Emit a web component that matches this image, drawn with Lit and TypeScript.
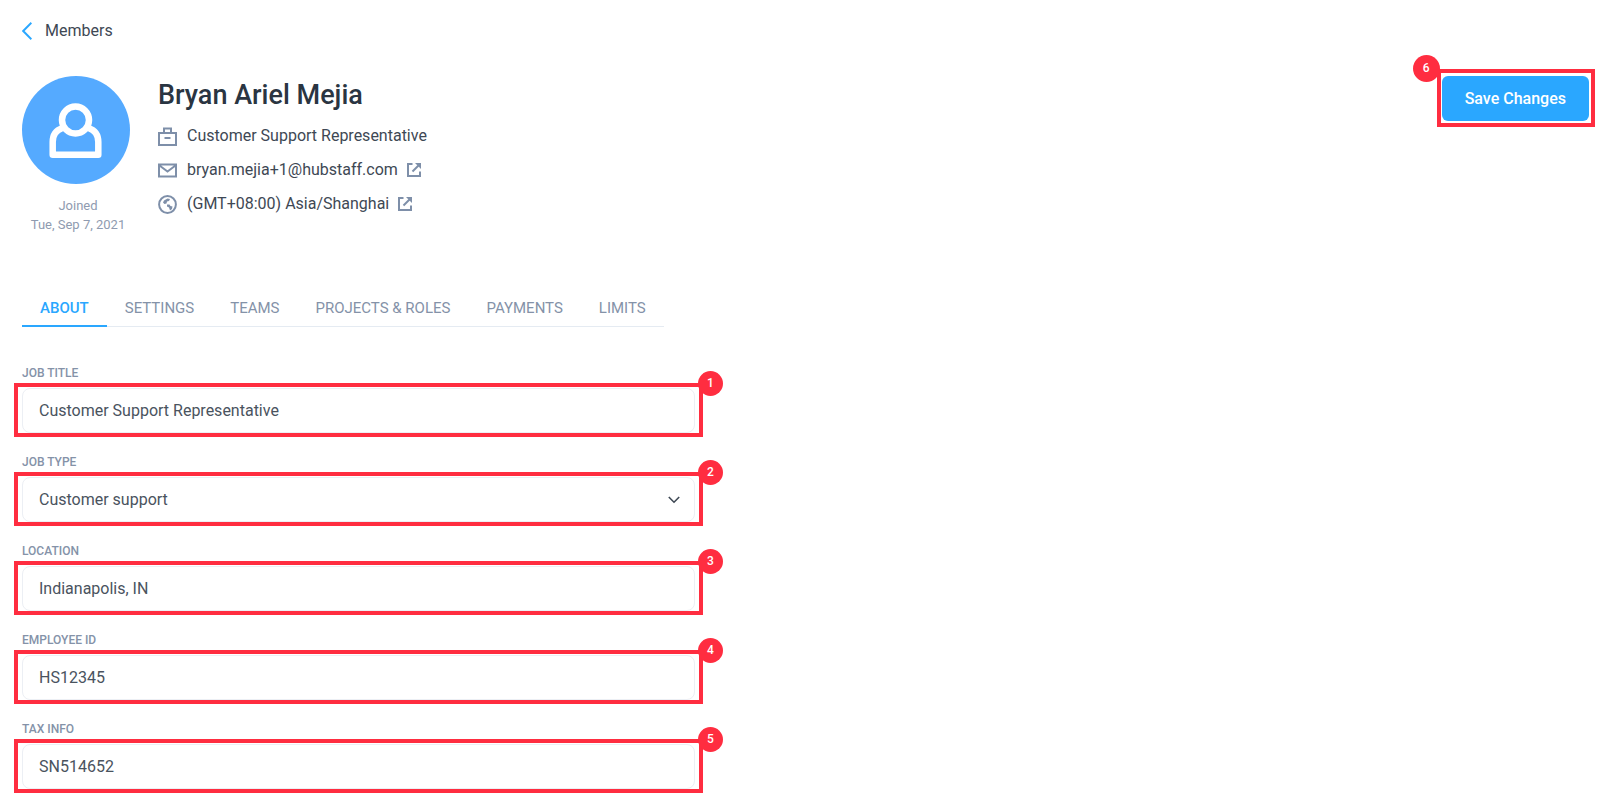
import { LitElement, html, svg, css, nothing } from "lit";
import { customElement, property } from "lit/decorators.js";

type Field = { id: string; label: string; value: string; options?: string[] };

const FIELDS: Field[] = [
  { id: "job-title", label: "Job title", value: "Customer Support Representative" },
  { id: "job-type", label: "Job type", value: "Customer support", options: ["Customer support"] },
  { id: "location", label: "Location", value: "Indianapolis, IN" },
  { id: "employee-id", label: "Employee ID", value: "HS12345" },
  { id: "tax-info", label: "Tax info", value: "SN514652" },
];

const TABS = ["About", "Settings", "Teams", "Projects & roles", "Payments", "Limits"];

const external = () => svg`<svg viewBox="0 0 14 14" width="14" height="14" aria-hidden="true">
  <path d="M5.500 1H1v12h12V8.500" fill="none" stroke="currentColor" stroke-width="2"/>
  <path d="M12 2L5.500 8.500" fill="none" stroke="currentColor" stroke-width="2"/>
  <path d="M8 0h6v6l-2-2-2-2z" fill="currentColor"/>
</svg>`;

/* Numbered frame that highlights the control it wraps. */
@customElement("step-mark")
class StepMark extends LitElement {
  @property({ type: Number }) step = 1;
  @property({ reflect: true }) side = "right";

  static styles = css`
    :host { display: block; position: relative; }
    .frame {
      position: absolute;
      inset: -5px -8px -4px -8px;
      border: 4px solid #ff2d40;
      pointer-events: none;
    }
    .badge {
      position: absolute;
      top: -16px;
      right: -24px;
      width: 25px;
      height: 25px;
      border-radius: 50%;
      background: #ff2d40;
      color: #fff;
      font: 500 12px/25px Roboto, sans-serif;
      text-align: center;
    }
    :host([side="left"]) .frame { inset: -7px -6px -6px -5px; }
    :host([side="left"]) .badge {
      right: auto;
      top: -18px;
      left: -28px;
      width: 27px;
      height: 27px;
      line-height: 27px;
    }
  `;

  render() {
    return html`<slot></slot><div class="frame"><span class="badge">${this.step}</span></div>`;
  }
}

@customElement("app-root")
class AppRoot extends LitElement {
  static styles = css`
    :host {
      display: block;
      box-sizing: border-box;
      padding: 20px 11px 8px 22px;
      background: #fff;
      color: #3e4854;
      font: 400 16px/22px Roboto, sans-serif;
    }
    * { box-sizing: border-box; }
    a { color: inherit; text-decoration: none; }
    svg { display: block; flex: none; }
    .back { display: inline-flex; align-items: center; gap: 13px; }
    .back svg { color: #2aa7ff; }
    .head { display: flex; align-items: flex-start; margin-top: 30px; }
    .person { flex: none; width: 112px; }
    .joined { margin: 12px 0 0; font-size: 13px; line-height: 19px; text-align: center; color: #8f9bb0; }
    .info { margin-left: 24px; }
    h1 { margin: 2px 0 0; font-size: 27px; line-height: 34px; font-weight: 500; color: #2a3542; }
    .facts { list-style: none; margin: 7px 0 0; padding: 0; }
    .facts li { display: flex; align-items: center; height: 34px; }
    .facts svg { color: #7e8fa9; }
    .facts span { margin-left: 10px; }
    .facts a { margin-left: 9px; }
    .save-slot { margin-left: auto; }
    .save {
      display: block;
      height: 45px;
      padding: 0 23px;
      border: 0;
      border-radius: 6px;
      background: #2aa7ff;
      color: #fff;
      font: 500 16px/22px Roboto, sans-serif;
    }
    .content { max-width: 673px; }
    .tabs {
      display: flex;
      width: fit-content;
      margin-top: 64px;
      border-bottom: 1px solid #e5ebf2;
      font-size: 15px;
      line-height: 20px;
      text-transform: uppercase;
      color: #8492a8;
    }
    .tabs a { padding: 0 18px 7px; margin-bottom: -1px; border-bottom: 2px solid transparent; }
    .tabs .active { color: #2aa7ff; font-weight: 500; border-color: #2aa7ff; }
    form { display: grid; gap: 20px; margin-top: 37px; }
    label {
      display: block;
      height: 24px;
      font-size: 12px;
      line-height: 18px;
      font-weight: 500;
      text-transform: uppercase;
      color: #8492a8;
    }
    .control {
      display: block;
      width: 100%;
      height: 45px;
      margin: 0;
      padding: 0 16px;
      border: 1px solid #eceff4;
      border-radius: 8px;
      outline: 0;
      appearance: none;
      background: #fff;
      color: #4a535e;
      font: 400 16px/22px Roboto, sans-serif;
    }
    .pick { position: relative; }
    .pick svg { position: absolute; right: 15px; top: 19px; pointer-events: none; }
  `;

  private renderField(f: Field, i: number) {
    const control = f.options
      ? html`<div class="pick">
          <select class="control" id=${f.id}>
            ${f.options.map((o) => html`<option ?selected=${o === f.value}>${o}</option>`)}
          </select>
          <svg width="12" height="8" viewBox="0 0 12 8" aria-hidden="true">
            <path d="M.8 1L6 6.2 11.2 1" fill="none" stroke="#3e4854" stroke-width="1.6" />
          </svg>
        </div>`
      : html`<input class="control" id=${f.id} type="text" .value=${f.value} />`;
    return html`<div>
      <label for=${f.id}>${f.label}</label>
      <step-mark .step=${i + 1}>${control}</step-mark>
    </div>`;
  }

  render() {
    return html`
      <a class="back" href="#members">
        <svg width="10" height="18" viewBox="0 0 10 18" aria-hidden="true">
          <path d="M9.4 .8L1.2 9l8.2 8.2" fill="none" stroke="currentColor" stroke-width="2" />
        </svg>
        Members
      </a>

      <header class="head">
        <div class="person">
          <svg width="108" height="108" viewBox="0 0 108 108" role="img" aria-label="Avatar">
            <circle cx="54" cy="54" r="54" fill="#55aaff" />
            <g fill="none" stroke="#fff" stroke-width="6.5" stroke-linejoin="round">
              <path d="M40.500 52C34.500 54 30.700 59 30.700 66v12.700h45.600V66c0-7-3.800-12-9.800-14" />
              <circle cx="53.500" cy="44" r="13.500" />
            </g>
          </svg>
          <p class="joined">Joined<br />Tue, Sep 7, 2021</p>
        </div>
        <div class="info">
          <h1>Bryan Ariel Mejia</h1>
          <ul class="facts">
            <li>
              <svg width="19" height="19" viewBox="0 0 19 19" fill="none" stroke="currentColor" stroke-width="2" aria-hidden="true">
                <path d="M1 6h17v12H1zM6 6V1.500h7V6M6.500 11h6" />
              </svg>
              <span>Customer Support Representative</span>
            </li>
            <li>
              <svg width="19" height="19" viewBox="0 0 19 19" fill="none" stroke="currentColor" stroke-width="2" aria-hidden="true">
                <path d="M1 3.500h17v12H1zM1.500 4.500l8 6 8-6" />
              </svg>
              <span>bryan.mejia+1@hubstaff.com</span>
              <a href="#email" aria-label="Open email">${external()}</a>
            </li>
            <li>
              <svg width="19" height="19" viewBox="0 0 19 19" aria-hidden="true">
                <circle cx="9.500" cy="9.500" r="8.400" fill="none" stroke="currentColor" stroke-width="2" />
                <path d="M6 5.500l3.500-2 2.500.5-1 2-2 .5-.5 2-2 .5-1.500-1.500zM9 9.500h2.500l1 1.500 2 .5-.5 2.500-2 1.500-1-3-2-1z" fill="currentColor" />
              </svg>
              <span>(GMT+08:00) Asia/Shanghai</span>
              <a href="#timezone" aria-label="Open time zone">${external()}</a>
            </li>
          </ul>
        </div>
        <step-mark class="save-slot" side="left" .step=${6}>
          <button class="save" type="button">Save Changes</button>
        </step-mark>
      </header>

      <main class="content">
        <nav class="tabs">
          ${TABS.map((t, i) => html`<a class=${i === 0 ? "active" : nothing} href="#tab-${i}">${t}</a>`)}
        </nav>
        <form>${FIELDS.map((f, i) => this.renderField(f, i))}</form>
      </main>
    `;
  }
}
